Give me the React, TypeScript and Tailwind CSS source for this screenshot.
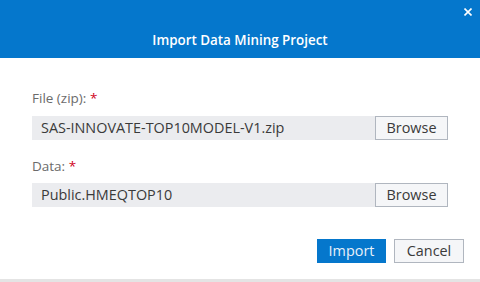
import React from "react";

export default function App() {
  const font = { fontFamily: "'Open Sans', 'Liberation Sans', sans-serif" };
  return (
    <div className="w-[480px] h-[282px] bg-white flex flex-col overflow-hidden" style={font}>
      <div className="h-[58px] bg-[#0577cc] relative flex items-end justify-center pb-[9px] shrink-0">
        <span className="text-white text-[13.4px] font-semibold leading-[18px]">Import Data Mining Project</span>
        <svg className="absolute right-[8px] top-[8px]" width="8" height="8" viewBox="0 0 8 8">
          <path d="M0.5 0.5L7.5 7.5M7.5 0.5L0.5 7.5" stroke="white" strokeWidth="1.6" />
        </svg>
      </div>
      <div className="flex-1 flex flex-col px-[32px] pt-[31px]">
        <div className="text-[13.5px] leading-[18px] text-[#6b6b6b]">
          File (zip): <span className="text-[#d0021b]">*</span>
        </div>
        <div className="flex mt-[9px] w-[416px]">
          <div className="flex-1 h-[24px] bg-[#ebecef] flex items-center pl-[9px] text-[14.4px] text-[#3a3a3a]">
            SAS-INNOVATE-TOP10MODEL-V1.zip
          </div>
          <button className="w-[73px] h-[24px] bg-[#f5f6f8] border border-[#b0b6bf] text-[14.4px] text-[#3a3a3a]">Browse</button>
        </div>
        <div className="text-[13.5px] leading-[18px] text-[#6b6b6b] mt-[17px]">
          Data: <span className="text-[#d0021b]">*</span>
        </div>
        <div className="flex mt-[8px] w-[416px]">
          <div className="flex-1 h-[24px] bg-[#ebecef] flex items-center pl-[9px] text-[14.4px] text-[#3a3a3a]">
            Public.HMEQTOP10
          </div>
          <button className="w-[73px] h-[24px] bg-[#f5f6f8] border border-[#b0b6bf] text-[14.4px] text-[#3a3a3a]">Browse</button>
        </div>
        <div className="flex justify-end gap-[8px] mt-[32px] mr-[-16px]">
          <button className="w-[69px] h-[24px] bg-[#0577cc] text-[14.4px] text-[#e8f1fa]">Import</button>
          <button className="w-[70px] h-[24px] bg-[#f5f6f8] border border-[#b0b6bf] text-[14.4px] text-[#3a3a3a]">Cancel</button>
        </div>
      </div>
      <div className="h-[3px] bg-[#e4e4e4] shrink-0" />
    </div>
  );
}
